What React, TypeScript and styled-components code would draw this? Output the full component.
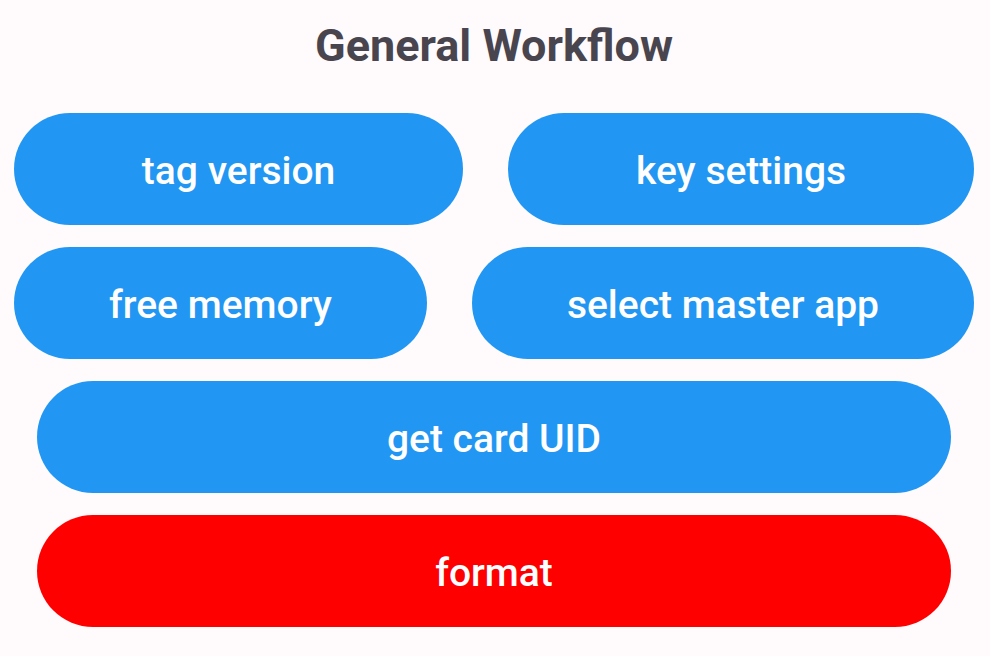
import React from "react";
import styled, { createGlobalStyle } from "styled-components";

const GlobalStyle = createGlobalStyle`
  *, *::before, *::after { box-sizing: border-box; }
  body {
    margin: 0;
    background: #fffbfd;
    font-family: Roboto, sans-serif;
  }
`;

const Page = styled.main`
  display: flex;
  flex-direction: column;
  padding: 16px 16px 28px 14px;
`;

const Title = styled.h1`
  margin: 0 0 37px;
  color: #49454f;
  font-size: 45px;
  font-weight: 700;
  line-height: 60px;
  text-align: center;
`;

const Actions = styled.div`
  display: flex;
  flex-direction: column;
  gap: 22px;
`;

const Row = styled.div<{ $inset?: boolean }>`
  display: flex;
  gap: 45px;
  padding: 0 ${({ $inset }) => ($inset ? "23px" : "0")};
`;

const ActionButton = styled.button<{ $danger?: boolean }>`
  flex: 1 1 auto;
  height: 112px;
  padding: 4px 24px 0;
  border: 0;
  border-radius: 56px;
  background: ${({ $danger }) => ($danger ? "#ff0000" : "#2196f3")};
  color: #ffffff;
  font-family: inherit;
  font-size: 39px;
  font-weight: 500;
  line-height: 56px;
  cursor: pointer;
`;

export default function App() {
  return (
    <>
      <GlobalStyle />
      <Page>
        <Title>General Workflow</Title>
        <Actions>
          <Row>
            <ActionButton type="button">tag version</ActionButton>
            <ActionButton type="button">key settings</ActionButton>
          </Row>
          <Row>
            <ActionButton type="button">free memory</ActionButton>
            <ActionButton type="button">select master app</ActionButton>
          </Row>
          <Row $inset>
            <ActionButton type="button">get card UID</ActionButton>
          </Row>
          <Row $inset>
            <ActionButton type="button" $danger>format</ActionButton>
          </Row>
        </Actions>
      </Page>
    </>
  );
}
